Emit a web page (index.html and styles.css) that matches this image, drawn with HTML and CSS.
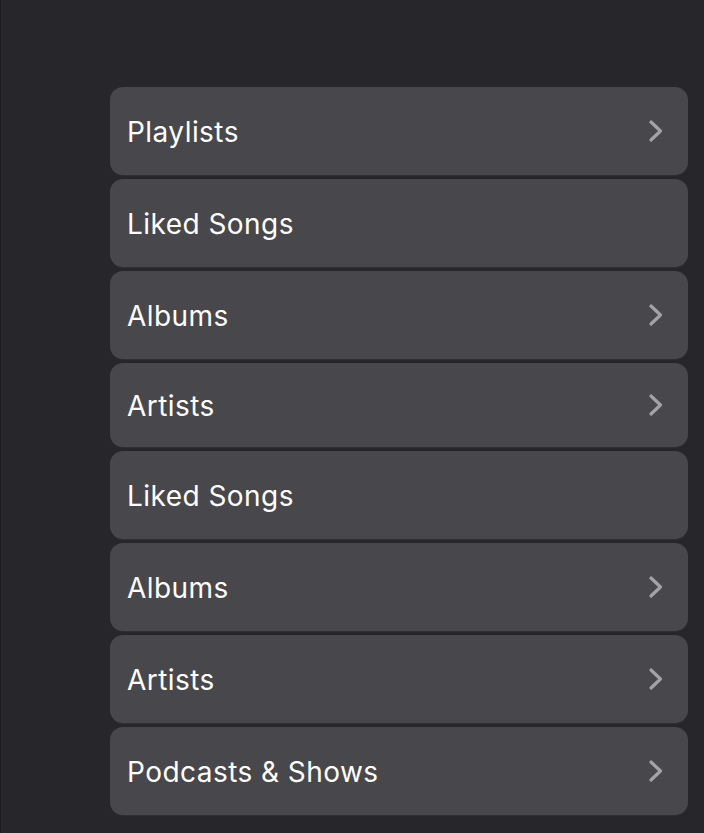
FILE: index.html
```html
<!DOCTYPE html>
<html lang="en">
<head>
<meta charset="utf-8">
<link rel="stylesheet" href="styles.css">
<title>Library</title>
</head>
<body>
<main class="screen">
  <ul class="list">
    <li class="row"><span class="label">Playlists</span><svg class="chev" viewBox="0 0 16 24"><path d="M3 3 L12.5 12 L3 21"/></svg></li>
    <li class="row"><span class="label">Liked Songs</span></li>
    <li class="row"><span class="label">Albums</span><svg class="chev" viewBox="0 0 16 24"><path d="M3 3 L12.5 12 L3 21"/></svg></li>
    <li class="row row-short"><span class="label">Artists</span><svg class="chev" viewBox="0 0 16 24"><path d="M3 3 L12.5 12 L3 21"/></svg></li>
    <li class="row"><span class="label">Liked Songs</span></li>
    <li class="row"><span class="label">Albums</span><svg class="chev" viewBox="0 0 16 24"><path d="M3 3 L12.5 12 L3 21"/></svg></li>
    <li class="row"><span class="label">Artists</span><svg class="chev" viewBox="0 0 16 24"><path d="M3 3 L12.5 12 L3 21"/></svg></li>
    <li class="row"><span class="label">Podcasts &amp; Shows</span><svg class="chev" viewBox="0 0 16 24"><path d="M3 3 L12.5 12 L3 21"/></svg></li>
  </ul>
</main>
</body>
</html>
```
FILE: styles.css
```css
html, body {
  margin: 0;
  padding: 0;
  background: #27262b;
}
.screen {
  min-height: 833px;
  box-sizing: border-box;
  border-left: 1px solid #1b1a1e;
  padding: 87px 16px 0 109px;
  font-family: Inter, "Noto Sans", sans-serif;
}
.list {
  list-style: none;
  margin: 0;
  padding: 0;
  display: flex;
  flex-direction: column;
  gap: 4px;
}
.row {
  height: 88px;
  box-sizing: border-box;
  background: #48474c;
  border-radius: 13px;
  display: flex;
  align-items: center;
  justify-content: space-between;
  padding: 0 24px 0 17px;
  box-shadow: 0 1px 0 rgba(255,255,255,0.04);
}
.row-short {
  height: 84px;
}
.label {
  color: #ffffff;
  font-size: 28px;
  letter-spacing: 0.45px;
  padding-top: 2px;
}
.chev {
  width: 16px;
  height: 24px;
  fill: none;
  stroke: #a3a2a8;
  stroke-width: 3.2;
  stroke-linecap: round;
  stroke-linejoin: round;
}
```
